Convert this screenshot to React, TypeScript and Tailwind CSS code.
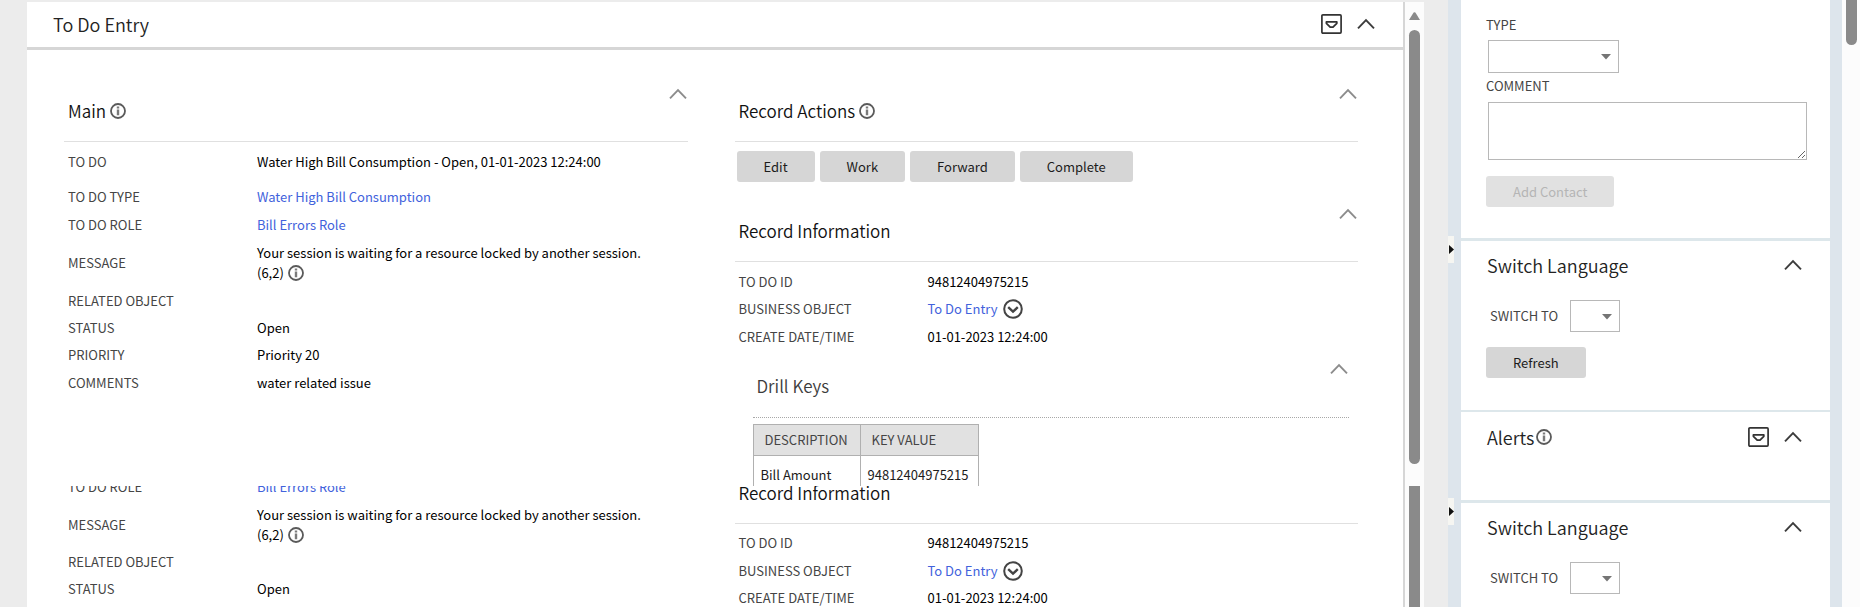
import { useId, type ReactNode } from "react";

function Chevron({ className }: { className: string }) {
  return (
    <svg width="18" height="12" viewBox="0 0 18 12" fill="none" className={className} aria-hidden="true">
      <path d="M1 10.4 9 2.2l8 8.2" stroke="currentColor" strokeWidth="1.9" />
    </svg>
  );
}

function InfoIcon() {
  return (
    <svg width="16" height="16" viewBox="0 0 16 16" fill="none" className="inline-block shrink-0 text-[#5a5a5a]" aria-hidden="true">
      <circle cx="8" cy="8" r="7" stroke="currentColor" strokeWidth="1.8" />
      <path d="M8 6.6v5.6M8 3.6v2" stroke="#7a7a7a" strokeWidth="2.4" />
    </svg>
  );
}

function MenuBoxIcon() {
  return (
    <svg width="21" height="20" viewBox="0 0 21 20" fill="none" className="text-[#333333]" aria-hidden="true">
      <rect x="0.9" y="0.9" width="19.2" height="18.2" rx="1" stroke="currentColor" strokeWidth="1.7" />
      <path d="M5.4 7.9h10.4v1.4L12 13.1H9.2L5.4 9.3z" stroke="currentColor" strokeWidth="1.8" strokeLinejoin="round" />
    </svg>
  );
}

function ContextMenuIcon() {
  return (
    <svg width="20" height="20" viewBox="0 0 20 20" fill="none" className="text-[#444444]" aria-hidden="true">
      <circle cx="10" cy="10" r="8.8" stroke="currentColor" strokeWidth="2" />
      <path d="M5.2 8.2 10 12.6l4.8-4.4" stroke="currentColor" strokeWidth="2.4" />
    </svg>
  );
}

function SectionHeader({ title, info, dotted }: { title: string; info?: boolean; dotted?: boolean }) {
  return (
    <div
      className={
        dotted
          ? "flex h-[57px] items-start justify-between border-b border-dotted border-[#a8a8a8] pl-1 text-[#3c3c3c]"
          : "flex h-[56px] items-start justify-between border-b border-[#e0e0e0] pl-1 text-[#111111]"
      }
    >
      <h2 className="flex items-center gap-1 pt-[13px] text-[17px] leading-6 font-[350]">
        {title}
        {info && <InfoIcon />}
      </h2>
      <button type="button" aria-label={`Collapse ${title}`} className="pt-[2px] pr-[1px]">
        <Chevron className="text-[#8c8c8c]" />
      </button>
    </div>
  );
}

function Row({ label, className, children }: { label: string; className: string; children?: ReactNode }) {
  return (
    <div className={`flex items-center pl-1 ${className}`}>
      <dt className="w-[189px] shrink-0 text-[13px] leading-5 text-[#454545]">{label}</dt>
      <dd className="text-[13px] leading-5 text-black">{children}</dd>
    </div>
  );
}

function TextLink({ children }: { children: ReactNode }) {
  return (
    <a href="#" className="text-[#4262dc]">
      {children}
    </a>
  );
}

function RoleToStatusRows() {
  return (
    <>
      <Row label="TO DO ROLE" className="h-[28px]">
        <TextLink>Bill Errors Role</TextLink>
      </Row>
      <Row label="MESSAGE" className="h-[48px]">
        Your session is waiting for a resource locked by another session.
        <br />
        <span className="flex items-center gap-1">
          (6,2) <InfoIcon />
        </span>
      </Row>
      <Row label="RELATED OBJECT" className="h-[27px]" />
      <Row label="STATUS" className="h-[27px]">
        Open
      </Row>
    </>
  );
}

function RecordInformation() {
  return (
    <>
      <SectionHeader title="Record Information" />
      <dl className="pt-[6px]">
        <Row label="TO DO ID" className="h-[27px]">
          94812404975215
        </Row>
        <Row label="BUSINESS OBJECT" className="h-[28px]">
          <span className="flex items-center gap-[5px]">
            <TextLink>To Do Entry</TextLink>
            <button type="button" aria-label="To Do Entry menu">
              <ContextMenuIcon />
            </button>
          </span>
        </Row>
        <Row label="CREATE DATE/TIME" className="h-[27px]">
          01-01-2023 12:24:00
        </Row>
      </dl>
    </>
  );
}

function ActionButton({ children }: { children: ReactNode }) {
  return (
    <button type="button" className="h-[31px] rounded-[3px] bg-[#d6d6d6] px-[27px] text-[13px] leading-5 text-[#1c1c1c]">
      {children}
    </button>
  );
}

function SelectBox({ id, className }: { id: string; className: string }) {
  return (
    <div className={`relative ${className}`}>
      <select id={id} className="h-full w-full appearance-none border border-[#b8b8b8] bg-white" />
      <svg width="10" height="6" viewBox="0 0 10 6" className="pointer-events-none absolute top-[14px] right-2" aria-hidden="true">
        <path d="M0 0h10L5 5.6z" fill="#757575" />
      </svg>
    </div>
  );
}

function ZoneHeader({ title, info, menu }: { title: string; info?: boolean; menu?: boolean }) {
  return (
    <div className="flex items-start justify-between pr-7 pl-[26px]">
      <h2 className="flex items-center gap-[2px] text-[18px] leading-6 font-[350] text-[#222222]">
        {title}
        {info && <InfoIcon />}
      </h2>
      <div className="flex h-6 items-center gap-[15px]">
        {menu && (
          <button type="button" aria-label={`${title} menu`}>
            <MenuBoxIcon />
          </button>
        )}
        <button type="button" aria-label={`Collapse ${title}`}>
          <Chevron className="text-[#3c3c3c]" />
        </button>
      </div>
    </div>
  );
}

function SwitchLanguage() {
  const id = useId();
  return (
    <section className="pt-3">
      <ZoneHeader title="Switch Language" />
      <div className="mt-[23px] flex items-center pl-[29px]">
        <label htmlFor={id} className="w-20 text-[13px] leading-5 text-[#454545]">
          SWITCH TO
        </label>
        <SelectBox id={id} className="h-8 w-[50px]" />
      </div>
      <div className="mt-[15px] pl-[25px]">
        <ActionButton>Refresh</ActionButton>
      </div>
    </section>
  );
}

function SplitterHandle() {
  return (
    <button type="button" aria-label="Toggle side bar" className="flex h-[27px] w-[6px] shrink-0 items-center bg-[#f6f6f2]">
      <svg width="6" height="10" viewBox="0 0 6 10" aria-hidden="true">
        <path d="M1 0 6 4.5 1 9z" fill="#111111" />
      </svg>
    </button>
  );
}

export default function App() {
  return (
    <div className="flex h-screen overflow-hidden bg-[#ececec] font-['Noto_Sans_CJK_SC','Noto_Sans',sans-serif]">
      <main className="mt-[2px] ml-[27px] flex min-w-0 flex-1 flex-col border-r-2 border-[#d6d6d6] bg-white">
        <header className="flex h-12 shrink-0 items-start justify-between border-b-[3px] border-[#d6d6d6] pt-[10px] pr-7 pl-[26px]">
          <h1 className="text-[18px] leading-6 font-[350] text-[#222222]">To Do Entry</h1>
          <div className="flex h-6 items-center gap-[15px]">
            <button type="button" aria-label="To Do Entry menu">
              <MenuBoxIcon />
            </button>
            <button type="button" aria-label="Collapse To Do Entry">
              <Chevron className="text-[#3c3c3c]" />
            </button>
          </div>
        </header>

        <div className="grid shrink-0 grid-cols-2 gap-[47px] pt-9 pr-[45px] pl-[37px]">
          <section>
            <SectionHeader title="Main" info />
            <dl>
              <Row label="TO DO" className="h-10">
                Water High Bill Consumption - Open, 01-01-2023 12:24:00
              </Row>
              <Row label="TO DO TYPE" className="h-[29px]">
                <TextLink>Water High Bill Consumption</TextLink>
              </Row>
              <RoleToStatusRows />
              <Row label="PRIORITY" className="h-[28px]">
                Priority 20
              </Row>
              <Row label="COMMENTS" className="h-[27px]">
                water related issue
              </Row>
            </dl>
          </section>

          <div>
            <SectionHeader title="Record Actions" info />
            <div className="flex h-16 items-start gap-[5px] pt-[9px] pl-[2px]">
              <ActionButton>Edit</ActionButton>
              <ActionButton>Work</ActionButton>
              <ActionButton>Forward</ActionButton>
              <ActionButton>Complete</ActionButton>
            </div>
            <RecordInformation />
            <section className="mt-[11px] mr-[9px] ml-[18px]">
              <SectionHeader title="Drill Keys" dotted />
              <table className="mt-[6px] border-collapse text-left text-[13px] leading-5">
                <thead>
                  <tr className="h-[31px] bg-[#e1e1e1] text-[#454545]">
                    <th className="w-[107px] border border-[#b0b0b0] pl-[11px] font-normal">DESCRIPTION</th>
                    <th className="w-[118px] border border-[#b0b0b0] pl-[11px] font-normal">KEY VALUE</th>
                  </tr>
                </thead>
                <tbody>
                  <tr className="h-[30px] align-bottom text-[#1c1c1c]">
                    <td className="border-x border-[#b0b0b0] pb-[1px] pl-[7px]">Bill Amount</td>
                    <td className="border-x border-[#b0b0b0] pb-[1px] pl-[7px]">94812404975215</td>
                  </tr>
                </tbody>
              </table>
            </section>
          </div>
        </div>

        <div className="grid min-h-0 flex-1 grid-cols-2 gap-[47px] overflow-hidden pr-[45px] pl-[37px]">
          <dl className="-mt-[13px]">
            <RoleToStatusRows />
          </dl>
          <section className="-mt-[18px]">
            <RecordInformation />
          </section>
        </div>
      </main>

      <div className="mt-[2px] flex w-[19px] shrink-0 flex-col items-center bg-[#fcfcfc] pt-[10px]">
        <svg width="11" height="8" viewBox="0 0 11 8" aria-hidden="true">
          <path d="M4.6 0.6Q5.5-.3 6.4.6L11 8H0z" fill="#8a8a8a" />
        </svg>
        <div className="mt-[10px] h-[434px] w-[11px] rounded-full bg-[#8a8a8a]" />
        <div className="mt-[22px] w-[11px] flex-1 bg-[#8a8a8a]" />
      </div>

      <div className="ml-6 flex w-[13px] shrink-0 flex-col gap-[235px] bg-[#dde5ec] pt-[236px]">
        <SplitterHandle />
        <SplitterHandle />
      </div>

      <aside className="w-[369px] shrink-0 bg-white">
        <section className="h-[241px] border-b-[3px] border-[#dde7eb] pt-[15px] pl-[25px]">
          <label htmlFor="contact-type" className="block text-[13px] leading-5 text-[#454545]">
            TYPE
          </label>
          <SelectBox id="contact-type" className="mt-[5px] ml-[2px] h-[33px] w-[131px]" />
          <label htmlFor="contact-comment" className="mt-[3px] block text-[13px] leading-5 text-[#454545]">
            COMMENT
          </label>
          <textarea id="contact-comment" className="mt-[6px] ml-[2px] block h-[58px] w-[319px] border border-[#b8b8b8]" />
          <button
            type="button"
            disabled
            className="mt-4 h-[31px] rounded-[3px] bg-[#e1e1e1] px-[27px] text-[13px] leading-5 text-[#b5b5b5]"
          >
            Add Contact
          </button>
        </section>
        <div className="h-[171px] border-b-2 border-[#dde7eb]">
          <SwitchLanguage />
        </div>
        <section className="h-[91px] border-b-[3px] border-[#dde7eb] pt-[13px]">
          <ZoneHeader title="Alerts" info menu />
        </section>
        <SwitchLanguage />
      </aside>

      <div className="w-3 shrink-0 bg-[#dde5ec]" />
      <div className="flex w-[18px] shrink-0 justify-center bg-[#fcfcfc]">
        <div className="h-[45px] w-[11px] rounded-b-full bg-[#8a8a8a]" />
      </div>
    </div>
  );
}
